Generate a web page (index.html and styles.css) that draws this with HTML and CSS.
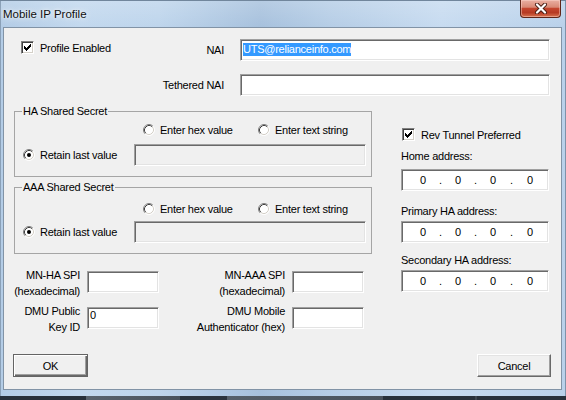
FILE: index.html
```html
<!DOCTYPE html>
<html>
<head>
<meta charset="utf-8">
<title>Mobile IP Profile</title>
<link rel="stylesheet" href="styles.css">
</head>
<body>
<div class="window">
  <div class="titlebar">
    <span class="title">Mobile IP Profile</span>
    <div class="close">
      <svg width="14" height="11" viewBox="0 0 14 11"><path d="M3 1.5L11 9.5M11 1.5L3 9.5" stroke="#4a1e14" stroke-width="4" stroke-linecap="round"/><path d="M3 1.5L11 9.5M11 1.5L3 9.5" stroke="#fff" stroke-width="2.2" stroke-linecap="round"/></svg>
    </div>
  </div>
  <div class="client">
    <div class="toprow row1">
      <div class="check">
        <span class="cb"><svg width="7" height="7" viewBox="0 0 7 7" shape-rendering="crispEdges"><path d="M6 0h1v1h-1z M5 1h2v1h-2z M0 2h1v1h-1z M4 2h3v1h-3z M0 3h2v1h-2z M3 3h3v1h-3z M0 4h5v1h-5z M1 5h3v1h-3z M2 6h1v1h-1z" fill="#000"/></svg></span>
        <span>Profile Enabled</span>
      </div>
      <span class="lbl">NAI</span>
      <div class="edit wide"><span class="sel">UTS@relianceinfo.com</span></div>
    </div>
    <div class="toprow row2">
      <span class="lbl">Tethered NAI</span>
      <div class="edit wide"></div>
    </div>

    <div class="main">
      <div class="leftcol">
        <fieldset class="group">
          <legend>HA Shared Secret</legend>
          <div class="radios">
            <div class="opt first"><svg class="rd" width="12" height="12" viewBox="0 0 12 12"><circle cx="6" cy="6" r="5" fill="#fff"/><path d="M2.11 9.89A5.5 5.5 0 0 1 9.89 2.11" fill="none" stroke="#808080"/><path d="M9.89 2.11A5.5 5.5 0 0 1 2.11 9.89" fill="none" stroke="#fff"/><path d="M2.82 9.18A4.5 4.5 0 0 1 9.18 2.82" fill="none" stroke="#404040"/><path d="M9.18 2.82A4.5 4.5 0 0 1 2.82 9.18" fill="none" stroke="#d4d0c8"/></svg><span>Enter hex value</span></div>
            <div class="opt"><svg class="rd" width="12" height="12" viewBox="0 0 12 12"><circle cx="6" cy="6" r="5" fill="#fff"/><path d="M2.11 9.89A5.5 5.5 0 0 1 9.89 2.11" fill="none" stroke="#808080"/><path d="M9.89 2.11A5.5 5.5 0 0 1 2.11 9.89" fill="none" stroke="#fff"/><path d="M2.82 9.18A4.5 4.5 0 0 1 9.18 2.82" fill="none" stroke="#404040"/><path d="M9.18 2.82A4.5 4.5 0 0 1 2.82 9.18" fill="none" stroke="#d4d0c8"/></svg><span>Enter text string</span></div>
          </div>
          <div class="retain">
            <div class="opt"><svg class="rd" width="12" height="12" viewBox="0 0 12 12"><circle cx="6" cy="6" r="5" fill="#fff"/><path d="M2.11 9.89A5.5 5.5 0 0 1 9.89 2.11" fill="none" stroke="#808080"/><path d="M9.89 2.11A5.5 5.5 0 0 1 2.11 9.89" fill="none" stroke="#fff"/><path d="M2.82 9.18A4.5 4.5 0 0 1 9.18 2.82" fill="none" stroke="#404040"/><path d="M9.18 2.82A4.5 4.5 0 0 1 2.82 9.18" fill="none" stroke="#d4d0c8"/><circle cx="6" cy="6" r="2" fill="#000"/></svg><span>Retain last value</span></div>
            <div class="edit secret disabled"></div>
          </div>
        </fieldset>

        <fieldset class="group second">
          <legend>AAA Shared Secret</legend>
          <div class="radios">
            <div class="opt first"><svg class="rd" width="12" height="12" viewBox="0 0 12 12"><circle cx="6" cy="6" r="5" fill="#fff"/><path d="M2.11 9.89A5.5 5.5 0 0 1 9.89 2.11" fill="none" stroke="#808080"/><path d="M9.89 2.11A5.5 5.5 0 0 1 2.11 9.89" fill="none" stroke="#fff"/><path d="M2.82 9.18A4.5 4.5 0 0 1 9.18 2.82" fill="none" stroke="#404040"/><path d="M9.18 2.82A4.5 4.5 0 0 1 2.82 9.18" fill="none" stroke="#d4d0c8"/></svg><span>Enter hex value</span></div>
            <div class="opt"><svg class="rd" width="12" height="12" viewBox="0 0 12 12"><circle cx="6" cy="6" r="5" fill="#fff"/><path d="M2.11 9.89A5.5 5.5 0 0 1 9.89 2.11" fill="none" stroke="#808080"/><path d="M9.89 2.11A5.5 5.5 0 0 1 2.11 9.89" fill="none" stroke="#fff"/><path d="M2.82 9.18A4.5 4.5 0 0 1 9.18 2.82" fill="none" stroke="#404040"/><path d="M9.18 2.82A4.5 4.5 0 0 1 2.82 9.18" fill="none" stroke="#d4d0c8"/></svg><span>Enter text string</span></div>
          </div>
          <div class="retain">
            <div class="opt"><svg class="rd" width="12" height="12" viewBox="0 0 12 12"><circle cx="6" cy="6" r="5" fill="#fff"/><path d="M2.11 9.89A5.5 5.5 0 0 1 9.89 2.11" fill="none" stroke="#808080"/><path d="M9.89 2.11A5.5 5.5 0 0 1 2.11 9.89" fill="none" stroke="#fff"/><path d="M2.82 9.18A4.5 4.5 0 0 1 9.18 2.82" fill="none" stroke="#404040"/><path d="M9.18 2.82A4.5 4.5 0 0 1 2.82 9.18" fill="none" stroke="#d4d0c8"/><circle cx="6" cy="6" r="2" fill="#000"/></svg><span>Retain last value</span></div>
            <div class="edit secret disabled"></div>
          </div>
        </fieldset>

        <div class="spi">
          <div class="plbl">MN-HA SPI<br>(hexadecimal)</div>
          <div class="edit small"></div>
          <div class="plbl">MN-AAA SPI<br>(hexadecimal)</div>
          <div class="edit small"></div>
          <div class="plbl">DMU Public<br>Key ID</div>
          <div class="edit small multi">0</div>
          <div class="plbl">DMU Mobile<br>Authenticator (hex)</div>
          <div class="edit small"></div>
        </div>
      </div>

      <div class="rightcol">
        <div class="check rev">
          <span class="cb"><svg width="7" height="7" viewBox="0 0 7 7" shape-rendering="crispEdges"><path d="M6 0h1v1h-1z M5 1h2v1h-2z M0 2h1v1h-1z M4 2h3v1h-3z M0 3h2v1h-2z M3 3h3v1h-3z M0 4h5v1h-5z M1 5h3v1h-3z M2 6h1v1h-1z" fill="#000"/></svg></span>
          <span>Rev Tunnel Preferred</span>
        </div>
        <div class="iplbl home">Home address:</div>
        <div class="edit ip home-ip"><span>0</span><span>.</span><span>0</span><span>.</span><span>0</span><span>.</span><span>0</span></div>
        <div class="iplbl primary">Primary HA address:</div>
        <div class="edit ip"><span>0</span><span>.</span><span>0</span><span>.</span><span>0</span><span>.</span><span>0</span></div>
        <div class="iplbl secondary">Secondary HA address:</div>
        <div class="edit ip"><span>0</span><span>.</span><span>0</span><span>.</span><span>0</span><span>.</span><span>0</span></div>
      </div>
    </div>

    <div class="buttons">
      <div class="btn default">OK</div>
      <div class="btn cancel">Cancel</div>
    </div>
  </div>
</div>
<div class="taskbar"></div>
</body>
</html>
```
FILE: styles.css
```css
* { box-sizing: border-box; }
html, body { margin: 0; padding: 0; }
body {
  width: 566px;
  height: 400px;
  overflow: hidden;
  font-family: "Liberation Sans", Arial, sans-serif;
  font-size: 11px;
  letter-spacing: -0.25px;
  color: #000;
  background: #232c37;
}
.window {
  width: 566px;
  height: 396px;
  display: flex;
  flex-direction: column;
  background:
    linear-gradient(180deg, rgba(255,255,255,0.18) 0, rgba(255,255,255,0) 27px),
    linear-gradient(90deg, #b3cce6 0%, #c2d8ee 14%, #bed5ec 28%, #a7c1dd 46%, #b5cde6 58%, #c7dbf0 78%, #b9d1ea 100%);
  box-shadow: inset 0 1px 0 #71869c, inset 1px 0 0 #8aa0b7, inset -1px 0 0 #7d93aa;
}
.titlebar {
  height: 27px;
  display: flex;
  align-items: center;
  padding-left: 3px;
  flex: none;
}
.title {
  font-family: "Liberation Sans", Arial, sans-serif;
  font-size: 11.5px;
  letter-spacing: 0;
  color: #101010;
  text-shadow: 0 0 7px rgba(255,255,255,0.95), 0 0 3px rgba(255,255,255,0.8);
}
.close {
  margin-left: auto;
  margin-right: 5px;
  align-self: flex-start;
  width: 41px;
  height: 18px;
  border: 1px solid #5f2619;
  border-top: none;
  border-radius: 0 0 4px 4px;
  background: linear-gradient(180deg, #eab0a2 0%, #d98a76 42%, #c4462e 50%, #b63a23 74%, #d8734f 100%);
  box-shadow: inset 0 0 0 1px rgba(255,220,210,0.45);
  display: flex;
  align-items: center;
  justify-content: center;
}
.client {
  margin-left: 3px;
  width: 559px;
  height: 363px;
  flex: none;
  background: #f0f0f0;
  border: 1px solid #8193a6;
  display: flex;
  flex-direction: column;
}

/* top rows */
.toprow { display: flex; align-items: center; height: 22px; flex: none; }
.row1 { margin-top: 11px; }
.row2 { margin-top: 13px; }
.check { display: flex; align-items: center; }
.row1 .check { align-self: flex-start; margin-top: 2px; margin-left: 17px; }
.cb {
  width: 13px;
  height: 13px;
  flex: none;
  margin-right: 6px;
  background: #fff;
  border: 1px solid;
  border-color: #808080 #fff #fff #808080;
  box-shadow: inset 1px 1px 0 #404040, inset -1px -1px 0 #d4d0c8;
  display: flex;
  align-items: center;
  justify-content: center;
}
.cb svg { display: block; }
.lbl { flex: 1; text-align: right; padding-right: 16px; }

.edit {
  background: #fff;
  border: 1px solid;
  border-color: #a0a0a0 #fff #fff #a0a0a0;
  box-shadow: inset 1px 1px 0 #696969, inset -1px -1px 0 #e3e3e3;
  height: 22px;
  flex: none;
}
.edit.disabled { background: #f0f0f0; }
.wide {
  width: 310px;
  margin-right: 11px;
  display: flex;
  align-items: center;
  padding: 0 0 1px 2px;
}
.sel { background: #3399ff; color: #fff; line-height: 13px; }

/* main */
.main { display: flex; margin-top: 8px; flex: none; }
.leftcol { width: 368px; flex: none; }
fieldset.group {
  margin: 0 0 0 10px;
  width: 358px;
  min-width: 0;
  padding: 0 5px 10px 8px;
  border: 1px solid #a5a5a5;
}
fieldset.second { margin-top: 3px; }
legend { padding: 0 1px; margin-left: -1px; line-height: 14px; }
.radios { display: flex; align-items: center; height: 14px; margin-top: 5px; }
.second .radios { margin-top: 8px; }
.opt { display: flex; align-items: center; }
.radios .first { margin-left: 120px; width: 115px; }
.rd { flex: none; margin-right: 5px; display: block; }
.retain { display: flex; align-items: center; margin-top: 7px; height: 22px; }
.second .retain { margin-top: 5px; }
.retain .opt { flex: 1; }
.secret { width: 232px; }

.spi {
  display: grid;
  grid-template-columns: 76px 72px 119px 72px;
  column-gap: 7px;
  row-gap: 4px;
  margin-top: 13px;
}
.plbl { text-align: right; line-height: 16px; height: 32px; white-space: nowrap; }
.spi .edit { margin-top: 4px; }
.multi { padding: 0 0 0 2px; line-height: 14px; }

.rightcol { margin-left: 29px; width: 148px; flex: none; }
.rev { margin-top: 24px; margin-left: 1px; height: 13px; }
.iplbl { line-height: 14px; }
.home { margin-top: 8px; }
.home-ip { margin-top: 6px; }
.primary { margin-top: 13px; }
.secondary { margin-top: 10px; }
.primary + .ip, .secondary + .ip { margin-top: 3px; }
.ip {
  width: 148px;
  display: grid;
  grid-template-columns: 20px 15px 20px 15px 20px 17px 20px;
  align-items: center;
  padding-left: 11px;
  line-height: 14px;
}
.ip span { text-align: center; }

/* buttons */
.buttons {
  display: flex;
  justify-content: space-between;
  margin-top: 19px;
  padding: 0 10px 0 9px;
  flex: none;
}
.btn {
  width: 75px;
  height: 23px;
  background: #f0f0f0;
  display: flex;
  align-items: center;
  justify-content: center;
  border: 1px solid;
  border-color: #fff #696969 #696969 #fff;
  box-shadow: inset -1px -1px 0 #a0a0a0, inset 1px 1px 0 #e3e3e3;
}
.btn.default {
  border: 1px solid #646464;
  box-shadow: inset 1px 1px 0 #fff, inset -1px -1px 0 #696969, inset -2px -2px 0 #a0a0a0;
}
.btn.cancel { width: 74px; }

.taskbar {
  height: 4px;
  background: linear-gradient(90deg, #28313b 0, #28313b 86px, #59636e 86px, #4a535d 180px, #2b343e 180px, #2b343e 227px, #56606a 227px, #49525c 383px, #28313b 383px, #28313b 475px, #3d4650 475px, #3d4650 477px, #28313b 477px);
}
```
